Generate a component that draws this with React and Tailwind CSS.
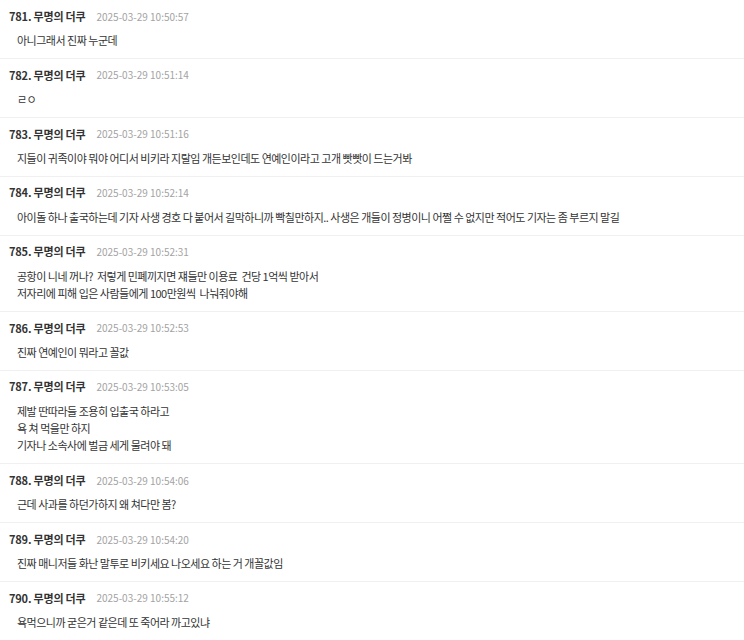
import React from 'react';

const posts = [
  { no: 781, time: '2025-03-29 10:50:57', lines: ['아니그래서 진짜 누군데'] },
  { no: 782, time: '2025-03-29 10:51:14', lines: ['ㄹㅇ'] },
  { no: 783, time: '2025-03-29 10:51:16', lines: ['지들이 귀족이야 뭐야 어디서 비키라 지랄임 개든보인데도 연예인이라고 고개 빳빳이 드는거봐'] },
  { no: 784, time: '2025-03-29 10:52:14', lines: ['아이돌 하나 출국하는데 기자 사생 경호 다 붙어서 길막하니까 빡칠만하지.. 사생은 개들이 정병이니 어쩔 수 없지만 적어도 기자는 좀 부르지 말길'] },
  { no: 785, time: '2025-03-29 10:52:31', lines: ['공항이 니네 꺼나?  저렇게 민폐끼지면 쟤들만 이용료  건당 1억씩 받아서', '저자리에 피해 입은 사람들에게 100만원씩  나눠줘야해'] },
  { no: 786, time: '2025-03-29 10:52:53', lines: ['진짜 연예인이 뭐라고 꼴값'] },
  { no: 787, time: '2025-03-29 10:53:05', lines: ['제발 딴따라들 조용히 입출국 하라고', '욕 쳐 먹을만 하지', '기자나 소속사에 벌금 세게 물려야 돼'] },
  { no: 788, time: '2025-03-29 10:54:06', lines: ['근데 사과를 하던가하지 왜 쳐다만 봄?'] },
  { no: 789, time: '2025-03-29 10:54:20', lines: ['진짜 매니저들 화난 말투로 비키세요 나오세요 하는 거 개꼴값임'] },
  { no: 790, time: '2025-03-29 10:55:12', lines: ['욕먹으니까 굳은거 같은데 또 죽어라 까고있냐'] },
];

const Post = ({ post }) => (
  <div className="border-b border-[#f0f0f0] pl-[9px] pr-3 pt-[7px] pb-[8.6px]">
    <div className="flex items-center h-[18px]">
      <span className="text-[11px] font-bold text-[#333] tracking-[-0.2px]">{post.no}. 무명의 더쿠</span>
      <span className="ml-[11px] text-[10px] text-[#a3a3a3]">{post.time}</span>
    </div>
    <div className="mt-[7px] pl-[8px] text-[11px] leading-[17.3px] tracking-[-0.5px] text-[#333] whitespace-pre">
      {post.lines.map((line, i) => (
        <div key={i}>{line}</div>
      ))}
    </div>
  </div>
);

export default function App() {
  return (
    <div className="w-[744px] h-[640px] overflow-hidden bg-white font-['Noto_Sans_CJK_KR','Noto_Sans',sans-serif]">
      {posts.map(post => (
        <Post key={post.no} post={post} />
      ))}
    </div>
  );
}
